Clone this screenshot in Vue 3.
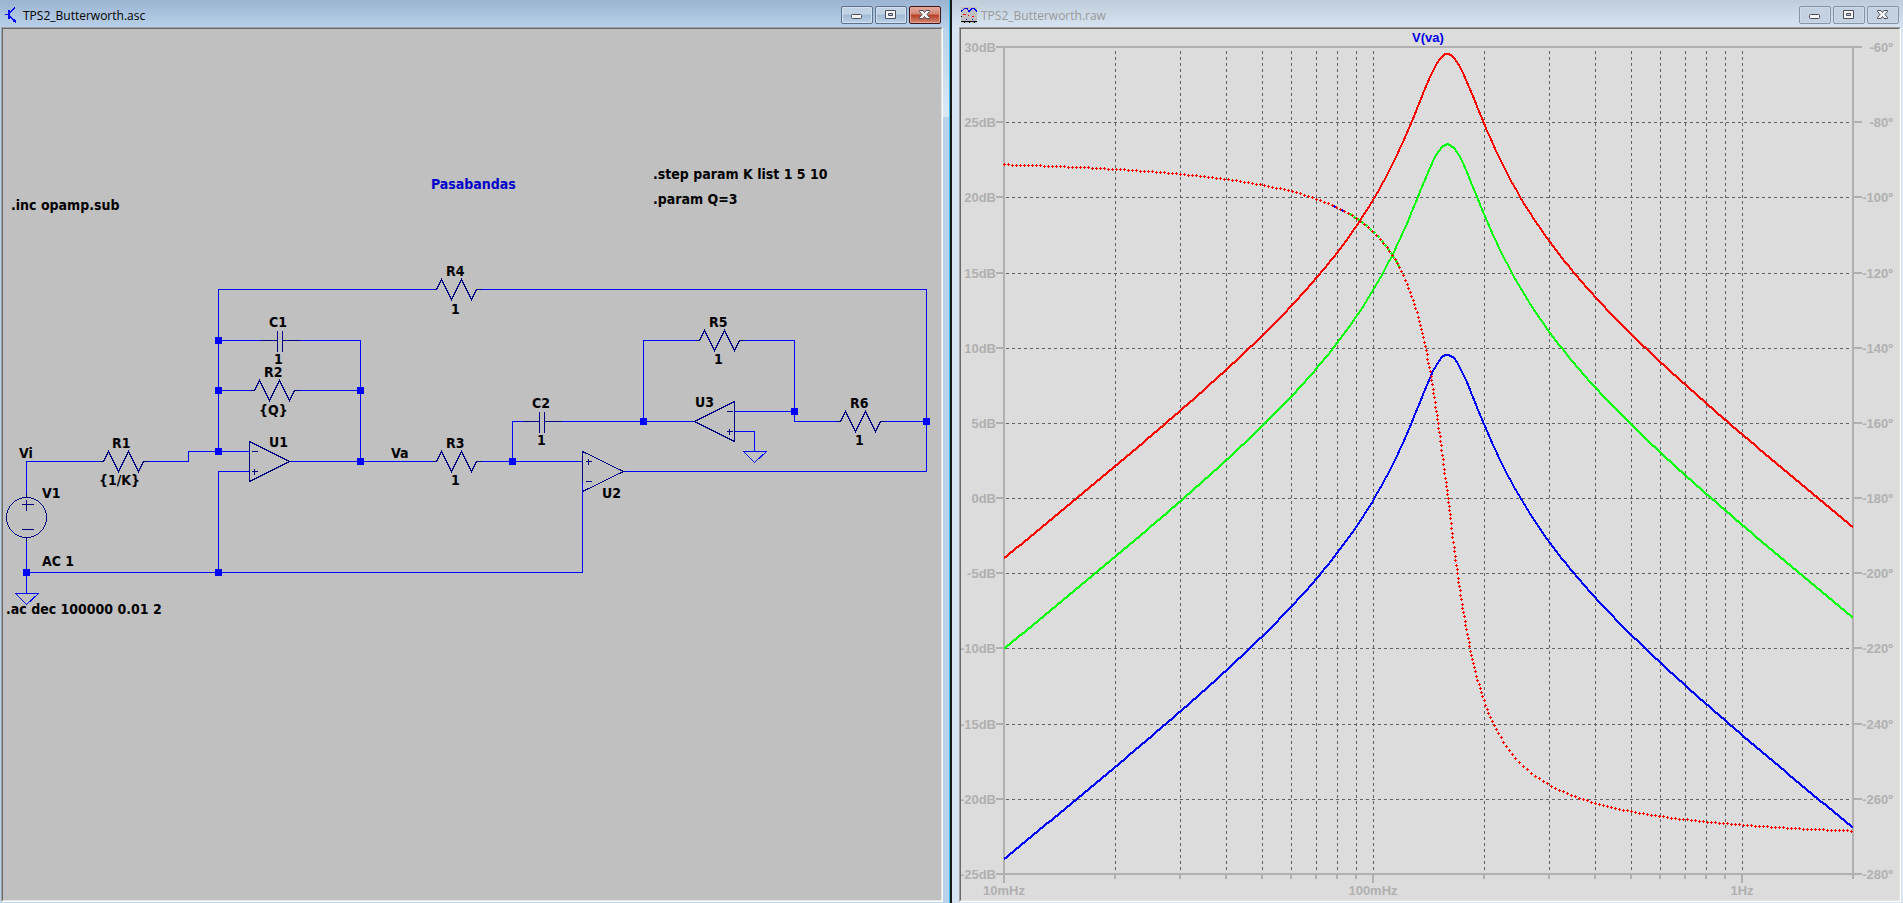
<script setup>
// ---- schematic ----
const wires = [
  'M26 497V461H103', 'M143 461H188V451H249', 'M249 471H218V572', 'M26 537V593', 'M26 572H582V481',
  'M218 451V289H436', 'M476 289H926V471H623', 'M218 340H277', 'M282 340H360V461', 'M218 390H254',
  'M294 390H360', 'M289 461H436', 'M476 461H582', 'M512 461V421H539', 'M544 421H694',
  'M643 421V340H699', 'M739 340H794V421H840', 'M734 411H794', 'M880 421H926', 'M734 431H754V451',
]
const grounds = ['M15 593H38L26 604Z', 'M743 451H766L754 462Z']
const nodes = [
  [26, 572], [218, 572], [218, 451], [218, 390], [218, 340], [360, 390], [360, 461],
  [512, 461], [643, 421], [794, 411], [926, 421],
]
const resistors = [[103, 461], [436, 289], [254, 390], [436, 461], [699, 340], [840, 421]]
const resistorPath = ([x, y]) => `M${x - 4} ${y}h4l5 -10l10 20l10 -20l10 20l5 -10h5`
const capacitors = [[277, 340], [539, 421]]
const capacitorPath = ([x, y]) => `M${x - 17} ${y}h17M${x} ${y - 10}v21M${x + 5} ${y - 10}v21M${x + 5} ${y}h17`
const opamps = [
  'M249 441V481L289 461ZM251 451h6M251 471h6M254 468v6',
  'M582 481V451L623 471L582 491M585 461h6M588 458v6M585 481h6',
  'M734 401V441L694 421ZM726 411h6M726 431h6M729 428v6',
]
const labels = [
  ['Vi', 19, 458], ['V1', 42, 498], ['AC 1', 42, 566], ['.ac dec 100000 0.01 2', 6, 614],
  ['R1', 112, 448], ['{1/K}', 99, 485], ['U1', 269, 447], ['R4', 446, 276], ['1', 451, 314],
  ['C1', 269, 327], ['1', 274, 364], ['R2', 264, 377], ['{Q}', 259, 415], ['Va', 391, 458],
  ['R3', 446, 448], ['1', 451, 485], ['C2', 532, 408], ['1', 537, 445], ['U2', 602, 498],
  ['R5', 709, 327], ['1', 714, 364], ['U3', 695, 407], ['R6', 850, 408], ['1', 855, 445],
  ['.inc opamp.sub', 11, 210], ['.step param K list 1 5 10', 653, 179], ['.param Q=3', 653, 204],
]

// ---- Bode plot ----
const left = 1004, right = 1853, top = 47, bottom = 874, decade = 369
const Q = 3
const xOf = f => left + Math.log10(f / 0.01) * decade
const rowStep = (bottom - top) / 11
const rows = Array.from({ length: 12 }, (_, i) => ({
  y: Math.round(top + i * rowStep), db: `${30 - 5 * i}dB`, deg: `${-60 - 20 * i}º`,
}))
const columns = []
for (const base of [0.01, 0.1, 1]) {
  for (let n = 1; n < 10; n++) {
    const f = base * n
    if (f > 0.011 && f < 1.9) columns.push({ x: Math.round(xOf(f)), major: n === 1 })
  }
}
const decades = [['10mHz', 1004], ['100mHz', 1373], ['1Hz', 1742]]
const omega = x => 2 * Math.PI * 0.01 * 10 ** ((x - left) / decade)
const gainY = (x, k) => {
  const w = omega(x)
  const db = 20 * Math.log10((k * w) / Math.hypot(1 - w * w, w / Q))
  return top + ((30 - db) * (bottom - top)) / 55
}
const phaseY = x => {
  const w = omega(x)
  const deg = -90 - (Math.atan2(w / Q, 1 - w * w) * 180) / Math.PI
  return top + ((-60 - deg) * (bottom - top)) / 220
}
const trace = k => {
  const pts = []
  for (let x = left; x <= right; x += 3) pts.push(`${x},${Math.round(gainY(x, k))}`)
  pts.push(`${right},${Math.round(gainY(right, k))}`)
  return pts.join(' ')
}
const traces = [['blue', 1], ['lime', 5], ['red', 10]].map(([color, k]) => ({ color, points: trace(k) }))
const dots = (from, to, gap = 4) => {
  let d = '', lx = -99, ly = -99
  for (let i = from * 10; i <= to * 10; i++) {
    const x = i / 10, y = phaseY(x)
    if (Math.max(Math.abs(x - lx), Math.abs(y - ly)) >= gap) {
      d += `M${Math.round(x) - 1} ${Math.round(y)}h3v1h-3zM${Math.round(x)} ${Math.round(y) - 1}h1v3h-1z`
      lx = x
      ly = y
    }
  }
  return d
}
const phases = [['blue', dots(1334, 1348, 8)], ['lime', dots(1350, 1398)], ['red', dots(left, right)]]
</script>

<template>
  <main class="desktop">
    <section class="window active">
      <header class="bar">
        <svg class="icon" viewBox="0 0 16 16" aria-hidden="true">
          <g fill="none" stroke="#00f" shape-rendering="crispEdges">
            <path d="M2 7.500h4M7 5.500l5-5M7 9.500l5 5" />
            <path d="M6 3v9" stroke-width="2" />
          </g>
          <path d="M10 13h1v-1h1v1h1v3h-1v-1h-2z" fill="#00f" />
        </svg>
        <h1>TPS2_Butterworth.asc</h1>
        <div class="controls">
          <button type="button" aria-label="Minimize"><svg viewBox="0 0 30 16"><rect x="9.500" y="7.500" width="10" height="4" rx="1" /></svg></button>
          <button type="button" aria-label="Maximize"><svg viewBox="0 0 30 16"><path fill-rule="evenodd" d="M9.500 3.500h10v8h-10zM12.500 6.500h4v2h-4z" /></svg></button>
          <button type="button" class="close" aria-label="Close"><svg viewBox="0 0 30 16"><path d="M9.500 3.500h3.500l1.500 2l1.500-2h3.500v1l-2.500 3l2.500 3v1h-3.500l-1.500-2l-1.500 2h-3.500v-1l2.500-3l-2.500-3z" /></svg></button>
        </div>
      </header>
      <div class="client">
        <svg class="schematic" viewBox="3 29 938 871" preserveAspectRatio="xMinYMin meet" role="img" aria-label="Schematic">
          <g transform="translate(0.5 0.5)">
            <g class="wire"><path v-for="d in wires" :key="d" :d="d" /><path v-for="d in grounds" :key="d" :d="d" /></g>
            <g class="part">
              <path v-for="r in resistors" :key="r.join()" :d="resistorPath(r)" />
              <path v-for="c in capacitors" :key="c.join()" :d="capacitorPath(c)" />
              <path v-for="d in opamps" :key="d" :d="d" />
              <circle cx="26" cy="517" r="20" />
              <path d="M26 493v4M26 537v4M21 504h12M26 499v11M21 529h12" />
            </g>
          </g>
          <rect v-for="[x, y] in nodes" :key="`${x}-${y}`" class="node" :x="x - 3" :y="y - 3" width="7" height="7" />
          <text v-for="[t, x, y] in labels" :key="t + x + y" :x="x" :y="y">{{ t }}</text>
          <text class="comment" x="431" y="189">Pasabandas</text>
        </svg>
      </div>
    </section>

    <section class="window inactive">
      <header class="bar">
        <svg class="icon" viewBox="0 0 16 16" aria-hidden="true" shape-rendering="crispEdges">
          <path d="M0 0h16v16h-16z" fill="#c0c0c0" />
          <path d="M0 4.500l4-3h2l2 3l3-3h2l3 3" fill="none" stroke="#00f" />
          <path d="M2 7h3v1h-3zM7 8h1v1h-1zM11 9h2v1h-2z" fill="red" />
          <path d="M5 12h1v1h-1zM11 12h1v1h-1z" fill="#00f" />
          <path d="M0 14h16v1h-16zM0 9h1v1h-1zM3 15h1v1h-1zM8 15h1v1h-1zM13 15h1v1h-1z" />
        </svg>
        <h1>TPS2_Butterworth.raw</h1>
        <div class="controls">
          <button type="button" aria-label="Minimize"><svg viewBox="0 0 30 16"><rect x="9.500" y="7.500" width="10" height="4" rx="1" /></svg></button>
          <button type="button" aria-label="Maximize"><svg viewBox="0 0 30 16"><path fill-rule="evenodd" d="M9.500 3.500h10v8h-10zM12.500 6.500h4v2h-4z" /></svg></button>
          <button type="button" aria-label="Close"><svg viewBox="0 0 30 16"><path d="M9.500 3.500h3.500l1.500 2l1.500-2h3.500v1l-2.500 3l2.500 3v1h-3.500l-1.500-2l-1.500 2h-3.500v-1l2.500-3l-2.500-3z" /></svg></button>
        </div>
      </header>
      <div class="client">
        <svg class="plot" viewBox="961 29 938 871" preserveAspectRatio="xMinYMin meet" role="img" aria-label="V(va) gain and phase">
          <g class="grid" transform="translate(0.5 0.5)">
            <path v-for="r in rows.slice(1, -1)" :key="r.db" :d="`M${left + 1} ${r.y}H${right}`" />
            <path v-for="c in columns" :key="c.x" :d="`M${c.x} ${top + 3}V${bottom}`" />
          </g>
          <g class="axis">
            <path :d="`M${left} 46V883M${right} 46V879M${left} 47H${right}M${left} ${bottom}H${right}`" />
            <path v-for="r in rows" :key="r.deg" :d="`M996 ${r.y}h8M1853 ${r.y}h9`" />
            <path v-for="c in columns" :key="c.x" :d="`M${c.x} ${bottom}v${c.major ? 9 : 5}`" />
          </g>
          <polyline v-for="t in traces" :key="t.color" class="trace" :points="t.points" :stroke="t.color" />
          <path v-for="[color, d] in phases" :key="color" class="phase" :d="d" :fill="color" />
          <g class="scale">
            <text v-for="r in rows" :key="r.db" class="db" x="996" :y="r.y + 5">{{ r.db }}</text>
            <text v-for="r in rows" :key="r.deg" class="db" x="1893" :y="r.y + 5">{{ r.deg }}</text>
            <text v-for="[t, x] in decades" :key="t" :x="x" y="895">{{ t }}</text>
          </g>
          <text class="legend" x="1428" y="42">V(va)</text>
        </svg>
      </div>
    </section>
  </main>
</template>

<style>
html, body { margin: 0; background: #000; }
</style>

<style scoped>
.desktop {
  display: grid;
  grid-template-columns: 950fr 951fr;
  column-gap: 2px;
  height: 100vh;
  background: #1a1a1a;
  overflow: hidden;
}
.window {
  display: flex;
  flex-direction: column;
  box-sizing: border-box;
  min-width: 0;
  min-height: 0;
}
.active {
  padding: 0 6px 1px 1px;
  border-right: 1px solid #35c0e8;
  background:
    linear-gradient(#b9d1ea, #dbe9f6) right 28px / 6px 89px no-repeat,
    linear-gradient(#9ab4d1, #b9d1ea) top / 100% 28px no-repeat,
    #b9d1ea;
}
.inactive {
  padding: 0 2px 1px 7px;
  background: linear-gradient(#bfcddb, #d7e4f2) top / 100% 28px no-repeat, #d7e4f2;
}
.bar {
  display: flex;
  align-items: center;
  gap: 4px;
  box-sizing: border-box;
  height: 27px;
  padding: 3px 2px 0 2px;
  flex: none;
}
.icon { width: 16px; height: 16px; flex: none; }
h1 {
  margin: 0;
  padding-top: 1px;
  font: 400 12px/16px "Open Sans", "Noto Sans", sans-serif;
  color: #000;
  white-space: nowrap;
}
.inactive h1 { color: #999; }
.controls { display: flex; gap: 2px; margin-left: auto; }
button {
  box-sizing: border-box;
  width: 32px;
  height: 18px;
  padding: 0;
  border: 1px solid #5c718c;
  border-radius: 2px;
  background: linear-gradient(#c1d2e5 0 45%, #9fb8d3 50%, #bbd2e9);
  box-shadow: inset 0 0 0 1px #d4e2f0;
}
button svg { display: block; width: 30px; height: 16px; fill: #f6f6f6; stroke: #4a4e5c; }
.close {
  border-color: #43141a;
  background: linear-gradient(#e3a294 0 8%, #d08474 45%, #b73c22 50%, #d28a75);
  box-shadow: inset 0 0 0 1px #e0a698;
}
.inactive button {
  border-color: #8593a9;
  background: #c3d1e0;
  box-shadow: inset 0 0 0 1px #ccd9e7;
}
.client {
  flex: 1;
  min-height: 0;
  border: 1px solid;
  border-color: #a0a0a0 #fff #fff #a0a0a0;
}
.client > svg {
  display: block;
  box-sizing: border-box;
  width: 100%;
  height: 100%;
  border: 1px solid;
  border-color: #696969 #e3e3e3 #e3e3e3 #696969;
}
.schematic {
  background: #c0c0c0;
  font: bold 14px "DejaVu Sans Condensed", "Noto Sans", sans-serif;
}
.wire, .part { fill: none; stroke: #00f; stroke-width: 1px; shape-rendering: crispEdges; }
.part { stroke: #000080; }
.node { fill: #00f; }
.comment { fill: #0000c8; }
.plot { background: #dcdcdc; font: bold 13px "Liberation Sans", Arial, sans-serif; }
.grid { stroke: #606060; stroke-dasharray: 3 3; shape-rendering: crispEdges; }
.axis { stroke: #b0b0b0; stroke-width: 2px; shape-rendering: crispEdges; }
.scale { fill: #b0b0b0; text-anchor: middle; }
.scale .db { text-anchor: end; }
.trace { fill: none; stroke-width: 2px; shape-rendering: crispEdges; }
.phase { shape-rendering: crispEdges; }
.legend { fill: #0000e6; text-anchor: middle; }
</style>
